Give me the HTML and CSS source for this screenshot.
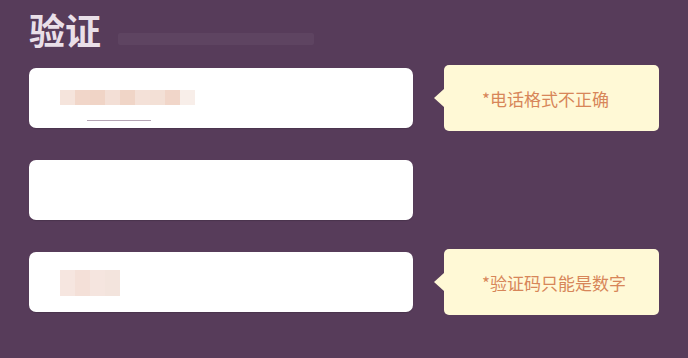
FILE: index.html
```html
<!DOCTYPE html>
<html lang="zh-CN">
<head>
    <meta charset="UTF-8">
    <meta name="viewport" content="width=device-width, initial-scale=1.0">
    <title>验证</title>
    <link rel="stylesheet" href="styles.css">
</head>
<body>

    <div class="page">
        <div class="head">
            <h1>验证</h1>
            <div class="head-note"></div>
        </div>

        <div class="row">
            <div class="field">
                <div class="mosaic mosaic-phone">
                    <span></span><span></span><span></span><span></span><span></span><span></span><span></span><span></span><span></span>
                </div>
                <div class="caret-line"></div>
            </div>
            <div class="tip">*电话格式不正确</div>
        </div>

        <div class="row">
            <div class="field"></div>
        </div>

        <div class="row">
            <div class="field">
                <div class="mosaic mosaic-code">
                    <span></span><span></span><span></span><span></span>
                </div>
            </div>
            <div class="tip">*验证码只能是数字</div>
        </div>
    </div>

</body>
</html>
```

FILE: styles.css
```css
* {
    margin: 0;
    padding: 0;
    box-sizing: border-box;
}

body {
    font-family: 'Noto Sans CJK SC', 'Noto Sans', sans-serif;
    background-color: #573c5a;
    width: 688px;
    height: 358px;
    overflow: hidden;
}

.page {
    padding: 7px 0 0 29px;
}

.head {
    display: flex;
    align-items: flex-end;
    height: 44px;
    margin-bottom: 14px;
}

h1 {
    font-size: 36px;
    font-weight: bold;
    color: #e9dfe8;
    line-height: 44px;
}

.head-note {
    width: 196px;
    height: 12px;
    margin: 0 0 6px 17px;
    background-color: #5e4461;
    border-radius: 2px;
}

.row {
    display: flex;
    align-items: center;
    height: 66px;
    margin-bottom: 26px;
}

.field {
    position: relative;
    width: 384px;
    height: 60px;
    background-color: #fff;
    border-radius: 7px;
    box-shadow: 0 1px 1px rgba(0, 0, 0, 0.15);
}

.mosaic {
    position: absolute;
    left: 31px;
    display: flex;
    flex-wrap: wrap;
}

.mosaic span {
    display: block;
    width: 15px;
    height: 15px;
}

.mosaic-phone {
    top: 22px;
    width: 135px;
}

.mosaic-phone span:nth-child(1) { background-color: #f5e4dc; }
.mosaic-phone span:nth-child(2) { background-color: #f1d6c9; }
.mosaic-phone span:nth-child(3) { background-color: #f0d4c6; }
.mosaic-phone span:nth-child(4) { background-color: #f3dfd6; }
.mosaic-phone span:nth-child(5) { background-color: #f0d5c7; }
.mosaic-phone span:nth-child(6) { background-color: #f4e1d8; }
.mosaic-phone span:nth-child(7) { background-color: #f3e0d6; }
.mosaic-phone span:nth-child(8) { background-color: #f1d6c9; }
.mosaic-phone span:nth-child(9) { background-color: #f8eee9; }

.caret-line {
    position: absolute;
    left: 58px;
    top: 52px;
    width: 64px;
    height: 1px;
    background-color: #b4a4b4;
}

.mosaic-code {
    top: 18px;
    width: 62px;
}

.mosaic-code span {
    height: 26px;
}

.mosaic-code span:nth-child(1) { background-color: #f6e6e0; }
.mosaic-code span:nth-child(2) { background-color: #f4e0d8; }
.mosaic-code span:nth-child(3) { background-color: #f5e5df; }
.mosaic-code span:nth-child(4) { background-color: #f3e4dd; }

.tip {
    position: relative;
    width: 215px;
    height: 66px;
    margin-left: 31px;
    padding-left: 38px;
    display: flex;
    align-items: center;
    background-color: #fff9d6;
    border-radius: 5px;
    color: #d78659;
    font-size: 17px;
}

.tip::before {
    content: '';
    position: absolute;
    left: -10px;
    top: 24px;
    border-top: 9px solid transparent;
    border-bottom: 9px solid transparent;
    border-right: 10px solid #fff9d6;
}
```
